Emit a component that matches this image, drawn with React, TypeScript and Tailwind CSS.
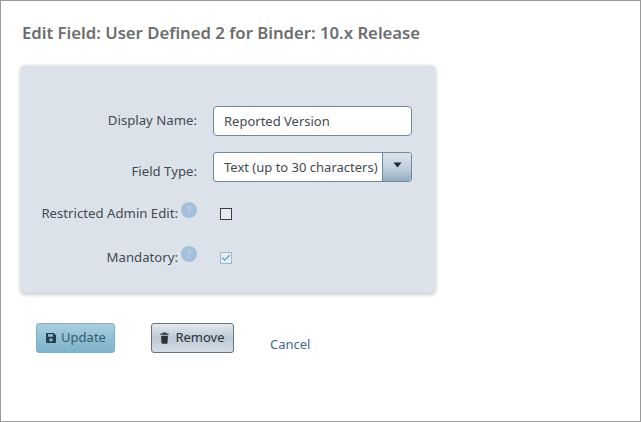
import { Check } from 'lucide-react'

const font = { fontFamily: '"Noto Sans", "Open Sans", sans-serif' }

function HelpIcon() {
    return (
        <span className="ml-[3px] flex h-[16px] w-[16px] -translate-y-[4px] items-center justify-center rounded-full bg-[#a3bfdb] text-[10px] font-bold leading-none text-[#bdd0e3]">
            ?
        </span>
    )
}

function FloppyIcon() {
    return (
        <svg width="12" height="12" viewBox="0 0 12 12" className="shrink-0">
            <path
                fillRule="evenodd"
                d="M1.5 1h7.3L11 3.2v6.8a1 1 0 0 1-1 1H2a1 1 0 0 1-1-1V1.5a.5.5 0 0 1 .5-.5zM3 2.2v2.6h5V2.2zM6 6.2a1.7 1.7 0 1 0 0 3.4 1.7 1.7 0 0 0 0-3.4z"
                fill="#24404e"
            />
        </svg>
    )
}

function TrashIcon() {
    return (
        <svg width="9" height="12" viewBox="0 0 11 13" preserveAspectRatio="none" className="shrink-0">
            <path d="M3.8 0.5h3.4l.6 1.2H10.5v1.4H.5V1.7h2.7zM1.3 4h8.4l-.5 8a.8.8 0 0 1-.8.7H2.6a.8.8 0 0 1-.8-.7z" fill="#2c3238" />
        </svg>
    )
}

function FieldRow({ label, help, labelClass, children }: { label: string; help?: boolean; labelClass?: string; children: React.ReactNode }) {
    return (
        <div className="flex h-[30px] items-center">
            <div className={`flex w-[176px] shrink-0 items-center justify-end ${labelClass ?? ''}`}>
                <span className="text-[13.2px] leading-none text-[#444b52]">{label}</span>
                {help && <HelpIcon />}
            </div>
            {children}
        </div>
    )
}

export default function App() {
    return (
        <div className="flex h-[422px] w-[641px] flex-col border border-[#9a9a9a] bg-white" style={font}>
            <h1 className="ml-[21px] mt-[22px] text-[16.7px] font-semibold leading-[20px] text-[#6b6e70]">
                Edit Field: User Defined 2 for Binder: 10.x Release
            </h1>

            <div className="ml-[20px] mt-[23px] flex h-[227px] w-[414px] flex-col rounded-[3px] bg-[#dbe2e9] pt-[40px] shadow-[0_1px_4px_rgba(120,120,120,0.55)]">
                <FieldRow label="Display Name:">
                    <div className="ml-[16px] flex h-[30px] w-[199px] items-center rounded-[4px] border border-[#6f8aa0] bg-white pl-[10px] pt-[1px] text-[13px] text-[#444b52]">
                        Reported Version
                    </div>
                </FieldRow>

                <div className="mt-[16px]">
                    <FieldRow label="Field Type:" labelClass="pt-[9px]">
                        <div className="ml-[16px] flex h-[30px] w-[199px] items-center rounded-[3px] border border-[#6f8aa0] bg-white text-[13px] text-[#444b52]">
                            <span className="flex-1 whitespace-nowrap pl-[10px] pt-[1px]">Text (up to 30 characters)</span>
                            <span className="flex h-full w-[29px] shrink-0 items-center justify-center rounded-r-[3px] border-l border-[#6f8aa0] bg-gradient-to-b from-[#dbe4ec] via-[#c3d2de] to-[#93acc0]">
                                <svg width="9" height="6" viewBox="0 0 9 6" className="-translate-y-[2px]">
                                    <path d="M0.5 0.5h8L4.5 5.5z" fill="#1d2a36" />
                                </svg>
                            </span>
                        </div>
                    </FieldRow>
                </div>

                <div className="mt-[17px]">
                    <FieldRow label="Restricted Admin Edit:" help>
                        <span className="ml-[23px] h-[12px] w-[12px] border border-[#3c3f42] bg-[#e6ebf0]" />
                    </FieldRow>
                </div>

                <div className="mt-[14px]">
                    <FieldRow label="Mandatory:" help>
                        <span className="ml-[23px] flex h-[12px] w-[12px] items-center justify-center border border-[#9cb9cf] bg-[#e6eef4]">
                            <Check size={10} strokeWidth={3} className="text-[#5f9cc0]" />
                        </span>
                    </FieldRow>
                </div>
            </div>

            <div className="ml-[35px] mt-[30px] flex items-start">
                <button className="flex h-[30px] w-[79px] items-center justify-center gap-[4px] rounded-[3px] border border-[#7fb0c4] bg-gradient-to-b from-[#a9d0df] via-[#8fc0d3] to-[#7fb3c9] text-[13px] text-[#3b5a6b]">
                    <FloppyIcon />
                    Update
                </button>
                <button className="ml-[36px] flex h-[30px] w-[83px] items-center justify-center gap-[6px] rounded-[3px] border border-[#66737d] bg-gradient-to-b from-[#e3e9ee] via-[#bccad5] to-[#d4dde4] text-[13px] text-[#2c3238]">
                    <TrashIcon />
                    Remove
                </button>
                <a className="ml-[36px] mt-[12px] text-[13px] leading-[18px] text-[#3c6c93]">Cancel</a>
            </div>
        </div>
    )
}
